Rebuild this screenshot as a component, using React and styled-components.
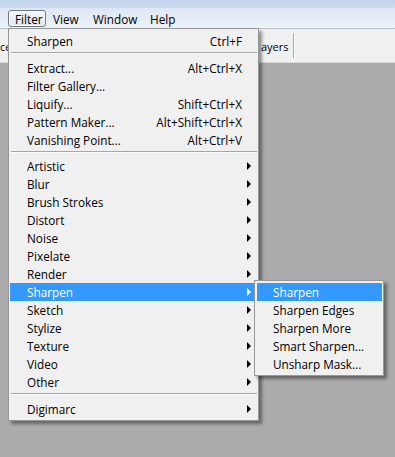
import React from "react";
import styled, { createGlobalStyle, css } from "styled-components";

const GlobalStyle = createGlobalStyle`
  html, body { margin: 0; padding: 0; }
  body {
    background: #ababab;
    font-family: "Open Sans", "Noto Sans", sans-serif;
    font-size: 11.75px;
    color: #000;
  }
`;

const Screen = styled.div`
  position: relative;
  width: 395px;
  height: 457px;
  overflow: hidden;
  display: flex;
  flex-direction: column;
  background: #ababab;
`;

const TitleStrip = styled.div`
  height: 8px;
  background: linear-gradient(#c0d3ea, #cddcef);
`;

const MenuBar = styled.div`
  height: 20px;
  box-sizing: border-box;
  padding: 2px 0 0 8px;
  display: flex;
  align-items: flex-start;
  background: linear-gradient(#dde7f4, #edf2f9);
`;

const MenuTitle = styled.div`
  width: ${(p) => p.$w}px;
  height: 17px;
  box-sizing: border-box;
  padding: 0 0 0 6px;
  display: flex;
  align-items: center;
  border: 1px solid transparent;
  border-radius: 3px;
  font-size: 11.75px;
  white-space: nowrap;
  ${(p) =>
    p.$open &&
    css`
      border-color: #6f7780;
      background: linear-gradient(#f4f7fb, #dfe6ee);
      box-shadow: inset 0 0 0 1px rgba(255, 255, 255, 0.8);
    `}
`;

const Toolbar = styled.div`
  height: 35px;
  box-sizing: border-box;
  border-top: 1px solid #b9c0c9;
  border-bottom: 1px solid #d8d8d8;
  background: #f0f0f0;
  display: grid;
  grid-template-columns: 261px 32px auto 1fr;
  align-items: center;
`;

const ToolLabel = styled.span`
  font-size: 11px;
  margin-top: 1px;
  white-space: nowrap;
  overflow: hidden;
`;

const ToolDivider = styled.div`
  width: 1px;
  height: 25px;
  margin-top: 4px;
  align-self: start;
  background: #a8a8a8;
  box-shadow: 1px 0 0 #fff;
`;

const Workspace = styled.div`
  flex: 1;
  background: #ababab;
`;

const Menu = styled.div`
  position: absolute;
  left: 8px;
  top: 28px;
  width: 251px;
  box-sizing: border-box;
  padding: 3px 1px 2px 1px;
  border: 1px solid #979797;
  background: #f0f0f0;
  box-shadow: 3px 3px 3px rgba(0, 0, 0, 0.4);
`;

const SubMenu = styled(Menu)`
  left: 244px;
  top: -3px;
  width: 130px;
  padding: 2px 1px 2px 2px;
`;

const Row = styled.div`
  position: relative;
  height: 18px;
  display: grid;
  grid-template-columns: 1fr auto 15px;
  align-items: center;
  padding-left: ${(p) => (p.$sub ? 16 : 17)}px;
  white-space: nowrap;
  background: ${(p) => (p.$active ? "#3399ff" : "transparent")};
  color: ${(p) => (p.$active ? "#fff" : "#000")};
`;

const Label = styled.span`
  line-height: 18px;
`;

const Shortcut = styled.span`
  line-height: 18px;
  text-align: right;
`;

const Arrow = styled.span`
  width: 0;
  height: 0;
  margin-left: 5px;
  border-top: 4px solid transparent;
  border-bottom: 4px solid transparent;
  border-left: 4px solid ${(p) => (p.$active ? "#fff" : "#000")};
`;

const Separator = styled.div`
  height: ${(p) => p.$h}px;
  box-sizing: border-box;
  padding-top: 2px;
  &::after {
    content: "";
    display: block;
    margin-left: 1px;
    height: 1px;
    background: #a6a6a6;
    box-shadow: 0 1px 0 #fbfbfb;
  }
`;

const subItems = [
  "Sharpen",
  "Sharpen Edges",
  "Sharpen More",
  "Smart Sharpen...",
  "Unsharp Mask...",
];

const groups = [
  [{ label: "Sharpen", shortcut: "Ctrl+F" }],
  [
    { label: "Extract...", shortcut: "Alt+Ctrl+X" },
    { label: "Filter Gallery..." },
    { label: "Liquify...", shortcut: "Shift+Ctrl+X" },
    { label: "Pattern Maker...", shortcut: "Alt+Shift+Ctrl+X" },
    { label: "Vanishing Point...", shortcut: "Alt+Ctrl+V" },
  ],
  [
    "Artistic",
    "Blur",
    "Brush Strokes",
    "Distort",
    "Noise",
    "Pixelate",
    "Render",
    "Sharpen",
    "Sketch",
    "Stylize",
    "Texture",
    "Video",
    "Other",
  ].map((l) => ({ label: l, sub: true, open: l === "Sharpen" })),
  [{ label: "Digimarc", sub: true }],
];

const sepHeights = [9, 8, 9];

const titles = [
  { t: "Filter", w: 38, open: true },
  { t: "View", w: 40 },
  { t: "Window", w: 57 },
  { t: "Help", w: 40 },
];

export default function App() {
  return (
    <>
      <GlobalStyle />
      <Screen>
        <TitleStrip />
        <MenuBar>
          {titles.map((m) => (
            <MenuTitle key={m.t} $w={m.w} $open={m.open}>
              {m.t}
            </MenuTitle>
          ))}
        </MenuBar>
        <Toolbar>
          <ToolLabel>ce</ToolLabel>
          <ToolLabel>ayers</ToolLabel>
          <ToolDivider />
        </Toolbar>
        <Workspace />
        <Menu>
          {groups.map((g, gi) => (
            <React.Fragment key={gi}>
              {gi > 0 && <Separator $h={sepHeights[gi - 1]} />}
              {g.map((it, i) => (
                <Row key={i} $active={it.open}>
                  <Label>{it.label}</Label>
                  <Shortcut>{it.shortcut || ""}</Shortcut>
                  {it.sub ? <Arrow $active={it.open} /> : <span />}
                  {it.open && (
                    <SubMenu>
                      {subItems.map((s, si) => (
                        <Row key={si} $sub $active={si === 0}>
                          <Label>{s}</Label>
                          <span />
                          <span />
                        </Row>
                      ))}
                    </SubMenu>
                  )}
                </Row>
              ))}
            </React.Fragment>
          ))}
        </Menu>
      </Screen>
    </>
  );
}
